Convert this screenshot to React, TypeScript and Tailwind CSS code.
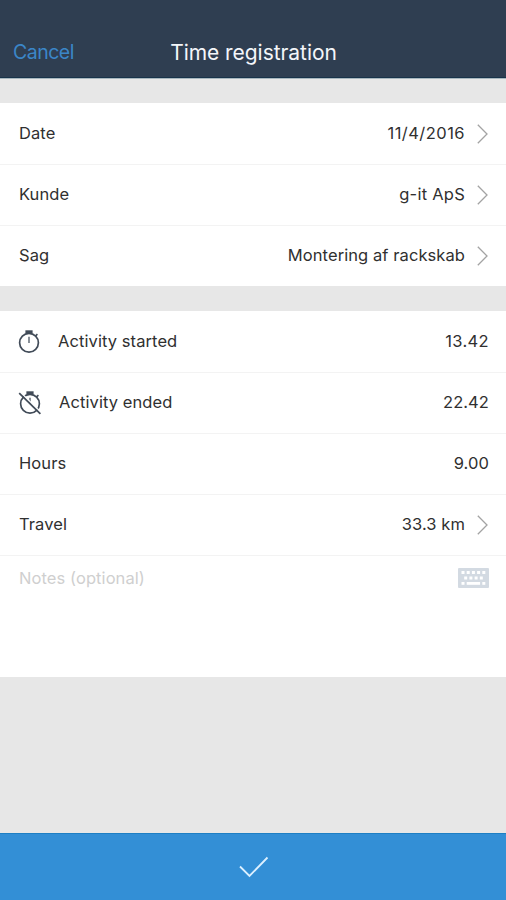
import type { ReactNode } from "react";
import clsx from "clsx";

interface RowProps {
  label: string;
  value: string;
  icon?: ReactNode;
  chevron?: boolean;
  valueClass?: string;
}

function Chevron() {
  return (
    <svg width="11" height="20" viewBox="0 0 11 20" fill="none" className="mr-px ml-3 shrink-0">
      <path d="M0.8 0.8 L10 10 L0.8 19.2" stroke="#a3a3a3" strokeWidth="1.3" />
    </svg>
  );
}

function StopwatchIcon({ off = false }: { off?: boolean }) {
  return (
    <svg width="24" height="24" viewBox="0 0 24 24" fill="none" stroke="#414b58" className={clsx("shrink-0", off ? "-ml-px" : "-ml-0.5")}>
      <circle cx="12" cy="12.7" r="9.4" strokeWidth="1.7" />
      <path d="M8.4 1.8 H15.6" strokeWidth="3" />
      <path d="M18.6 5.9 L20.4 4.1" strokeWidth="1.5" />
      <path d="M12 6.7 V13.1" stroke="#7d848d" strokeWidth="1.8" />
      {off && (
        <>
          <path d="M2.4 1.3 L23.2 21.5" stroke="#ffffff" strokeWidth="1.4" />
          <path d="M1.2 2.1 L22.4 22.9" strokeWidth="1.7" />
        </>
      )}
    </svg>
  );
}

function KeyboardIcon() {
  const top = [3.5, 8.7, 13.9, 19.1, 24.3];
  const middle = [6.2, 11.4, 16.6, 21.8];
  return (
    <svg width="31" height="20" viewBox="0 0 31 20" className="shrink-0">
      <rect width="31" height="20" rx="1" fill="#d3dae2" />
      <g fill="#ffffff">
        {top.map((x) => (
          <rect key={x} x={x} y="3" width="3" height="3" />
        ))}
        {middle.map((x) => (
          <rect key={x} x={x} y="8.5" width="3" height="3" />
        ))}
        <rect x="3.5" y="14" width="3" height="2.8" />
        <rect x="8.7" y="14" width="13.4" height="2.8" />
        <rect x="24.3" y="14" width="3" height="2.8" />
      </g>
    </svg>
  );
}

function Row({ label, value, icon, chevron, valueClass }: RowProps) {
  return (
    <div className="flex h-[61px] items-center pr-[17px] pb-px pl-[19px] last:h-[60px]">
      {icon}
      <span className={clsx(icon && "ml-[17px]")}>{label}</span>
      <span className={clsx("ml-auto", valueClass)}>{value}</span>
      {chevron && <Chevron />}
    </div>
  );
}

export default function App() {
  return (
    <div className="flex h-[900px] w-[506px] flex-col overflow-hidden bg-[#e7e7e7] font-['Inter',sans-serif] text-[16.5px] tracking-[0.08px] text-[#303030]">
      <header className="grid h-[79px] shrink-0 grid-cols-[1fr_auto_1fr] items-end border-b border-[#a9b8bf] bg-[#2f3e51] px-[13px] pb-[11px] shadow-[inset_0_-1px_0_#18334a]">
        <button className="justify-self-start pb-px text-[19.5px] leading-7 tracking-[-0.5px] text-[#3b86c8]">Cancel</button>
        <h1 className="pl-px text-[21px] leading-7 tracking-[-0.05px] text-[#f4f6fa]">Time registration</h1>
      </header>

      <section className="mt-6 shrink-0 divide-y divide-[#f3f3f3] bg-white pt-px">
        <Row label="Date" value="11/4/2016" valueClass="tracking-[0.45px]" chevron />
        <Row label="Kunde" value="g-it ApS" valueClass="tracking-[0.25px]" chevron />
        <Row label="Sag" value="Montering af rackskab" chevron />
      </section>

      <section className="mt-[25px] shrink-0 divide-y divide-[#f3f3f3] bg-white pt-px">
        <Row label="Activity started" value="13.42" valueClass="tracking-[0.35px]" icon={<StopwatchIcon />} />
        <Row label="Activity ended" value="22.42" icon={<StopwatchIcon off />} />
        <Row label="Hours" value="9.00" />
        <Row label="Travel" value="33.3 km" chevron />
        <div className="flex h-[121px] items-start justify-between pt-3 pr-[17px] pl-[19px]">
          <span className="leading-5 text-[#cfcfcf]">Notes (optional)</span>
          <KeyboardIcon />
        </div>
      </section>

      <button className="mt-auto flex h-[67px] shrink-0 items-center justify-center border-t border-[#1e7fc4] bg-[#338fd6] pl-0.5">
        <svg width="30" height="22" viewBox="0 0 30 22" fill="none">
          <path d="M1 10.5 L10.5 20 L28.5 1.5" stroke="#dcf0ff" strokeWidth="1.8" />
        </svg>
      </button>
    </div>
  );
}
